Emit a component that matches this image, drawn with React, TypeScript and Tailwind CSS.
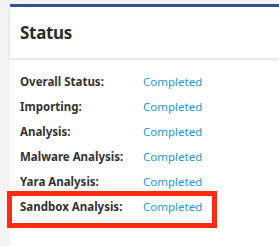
import React from 'react';

const rows = [
  'Overall Status:',
  'Importing:',
  'Analysis:',
  'Malware Analysis:',
  'Yara Analysis:',
  'Sandbox Analysis:',
];

export default function App() {
  return (
    <div
      className="w-[279px] h-[246px] bg-[#f3f3f3] pl-[10px] pt-[4px] overflow-hidden"
      style={{ fontFamily: '"Noto Sans", "Open Sans", sans-serif' }}
    >
      <div className="h-full bg-white border-t-[3px] border-[#2b5797]">
        <div className="h-[51px] flex items-center px-[10px] shadow-[0_2px_3px_rgba(0,0,0,0.12)]">
          <h1 className="text-[17px] font-bold text-[#2b2b2b] tracking-[-0.3px]">Status</h1>
        </div>
        <div className="pt-[11px] px-[10px]">
          {rows.map((label, i) => (
            <div key={label} className="relative flex items-center h-[25px] text-[11.5px]">
              {i === rows.length - 1 && (
                <div className="absolute left-[-13px] top-[-3px] w-[210px] h-[37px] border-[5px] border-[#ff2a0f]" />
              )}
              <span className="w-[123px] font-bold text-[#333333]">{label}</span>
              <span className="text-[#1e9ad6]">Completed</span>
            </div>
          ))}
        </div>
      </div>
    </div>
  );
}
